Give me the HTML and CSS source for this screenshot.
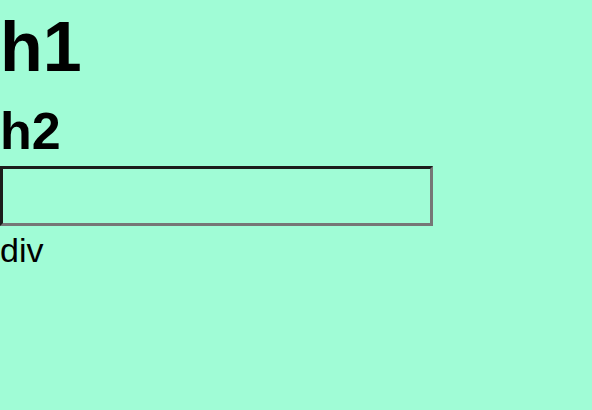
FILE: index.html
```html
<!DOCTYPE html>
<html lang="en">
<head>
<meta charset="utf-8">
<title>Elements</title>
<link rel="stylesheet" href="styles.css">
</head>
<body class="page">
  <h1 class="title">h1</h1>
  <h2 class="subtitle">h2</h2>
  <input class="field" type="text">
  <div class="note">div</div>
</body>
</html>
```
FILE: styles.css
```css
html, body {
  margin: 0;
  padding: 0;
}
.page {
  background: #a0fcd6;
  font-family: "Liberation Sans", Arial, sans-serif;
  color: #000;
  width: 592px;
  height: 410px;
  overflow: hidden;
}
.title {
  margin: 12px 0 0;
  font-size: 70px;
  line-height: 70px;
  font-weight: bold;
}
.subtitle {
  margin: 23px 0 0;
  font-size: 52px;
  line-height: 52px;
  font-weight: bold;
}
.field {
  display: block;
  box-sizing: border-box;
  margin: 9px 0 0;
  width: 433px;
  height: 60px;
  padding: 0;
  background: transparent;
  border-style: solid;
  border-width: 3px;
  border-color: #1c1c1c #767676 #767676 #1c1c1c;
  outline: none;
}
.note {
  margin: 7px 0 0;
  font-size: 34px;
  line-height: 34px;
}
```
